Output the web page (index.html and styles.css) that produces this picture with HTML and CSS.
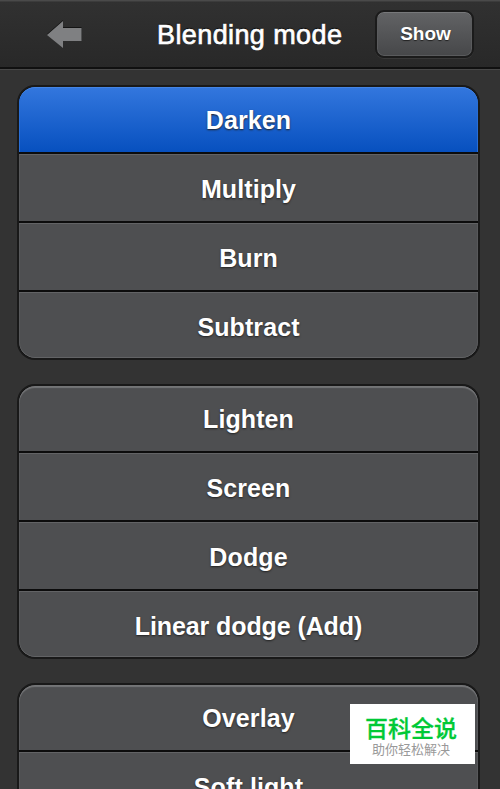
FILE: index.html
```
<!DOCTYPE html>
<html lang="en">
<head>
<meta charset="utf-8">
<title>Blending mode</title>
<link rel="stylesheet" href="styles.css">
</head>
<body>
<header class="bar">
  <svg class="back" width="36" height="30" viewBox="0 0 36 30" aria-hidden="true">
    <path d="M0 14 16 0V7H34.500V20H16V27Z" fill="#141414"/>
    <path d="M0 15 16 1V8H34.500V21H16V28Z" fill="#7f8082"/>
  </svg>
  <h1 class="title">Blending mode</h1>
  <button class="show">Show</button>
</header>
<main class="modes">
  <ul class="group">
    <li class="row selected"><span>Darken</span></li>
    <li class="row"><span>Multiply</span></li>
    <li class="row"><span>Burn</span></li>
    <li class="row"><span>Subtract</span></li>
  </ul>
  <ul class="group">
    <li class="row"><span>Lighten</span></li>
    <li class="row"><span>Screen</span></li>
    <li class="row"><span>Dodge</span></li>
    <li class="row"><span class="tight">Linear dodge (Add)</span></li>
  </ul>
  <ul class="group">
    <li class="row"><span>Overlay</span></li>
    <li class="row"><span>Soft light</span></li>
  </ul>
</main>
<aside class="badge">
  <strong class="badge-name">百科全说</strong>
  <span class="badge-line">助你轻松解决</span>
</aside>
</body>
</html>
```
FILE: styles.css
```
* { box-sizing: border-box; }
html, body { height: 100%; }
body {
  margin: 0;
  overflow: hidden;
  background: #333;
  color: #fff;
  font-family: "Liberation Sans", Arial, sans-serif;
}
.bar {
  display: flex;
  align-items: flex-start;
  height: 70px;
  border-top: 1px solid #4a4a4a;
  border-bottom: 1px solid #484848;
  background: linear-gradient(#313131, #282828);
  box-shadow: inset 0 1px #3c3c3c, inset 0 -2px #101010;
}
.back { flex: none; margin: 19px 0 0 47px; }
.title {
  width: 190px;
  margin: 18px 0 0 74px;
  font-size: 27px;
  line-height: 32px;
  font-weight: 400;
  letter-spacing: 0.4px;
  white-space: nowrap;
  -webkit-text-stroke: 0.7px #fff;
  text-shadow: 0 -1px 1px #000;
}
.show {
  width: 99px;
  height: 48px;
  margin: 9px 0 0 28px;
  padding: 0 0 0 2px;
  border: 2px solid #1b1b1b;
  border-radius: 9px;
  background: linear-gradient(#626365, #464749) padding-box;
  box-shadow: inset 0 1px #77787a, inset 0 0 0 1px #5a5b5d, 0 1px #383838;
  color: #fff;
  font: bold 19px "Liberation Sans", Arial, sans-serif;
  text-shadow: 0 1px 1px #222;
}
.modes {
  display: flex;
  flex-direction: column;
  gap: 24px;
  padding: 15px 20px 0 17px;
}
.group {
  margin: 0;
  padding: 0;
  overflow: hidden;
  list-style: none;
  border: 2px solid #191919;
  border-radius: 18px;
  background: #0c0c0c;
}
.row {
  display: flex;
  align-items: center;
  justify-content: center;
  height: 67px;
  padding-top: 2px;
  background: #4e4f51;
  box-shadow: inset 0 1px #626365, inset 1px 0 #58595b, inset -1px 0 #58595b;
  font-size: 25px;
  font-weight: 700;
  line-height: 30px;
  letter-spacing: 0.1px;
  text-shadow: 0 1px 2px #222;
}
.row + .row { margin-top: 2px; }
.row:first-child {
  height: 65px;
  padding-top: 0;
  border-radius: 16px 16px 0 0;
  box-shadow: inset 0 2px 1px #747577, inset 1px 0 #58595b, inset -1px 0 #58595b;
}
.row:nth-child(4) {
  height: 66px;
  padding-top: 3px;
  border-radius: 0 0 16px 16px;
  box-shadow: inset 0 1px #626365, inset 0 -1px #626365, inset 1px 0 #58595b, inset -1px 0 #58595b;
}
.row.selected {
  background: linear-gradient(#3377de, #0750bf);
  box-shadow: inset 0 1px #4585e4, inset 1px 0 #296ed5, inset -1px 0 #296ed5;
}
.tight { letter-spacing: -0.1px; }
.badge {
  position: absolute;
  left: 350px;
  top: 704px;
  width: 125px;
  height: 60px;
  display: flex;
  flex-direction: column;
  align-items: center;
  padding: 10px 3px 0 0;
  background: #fff;
  font-family: "Noto Sans CJK SC", sans-serif;
}
.badge-name {
  color: #00c936;
  font-size: 23px;
  font-weight: 500;
  line-height: 26px;
  -webkit-text-stroke: 0.3px #00c936;
}
.badge-line { margin-top: 1px; color: #999; font-size: 13px; line-height: 16px; }
```
